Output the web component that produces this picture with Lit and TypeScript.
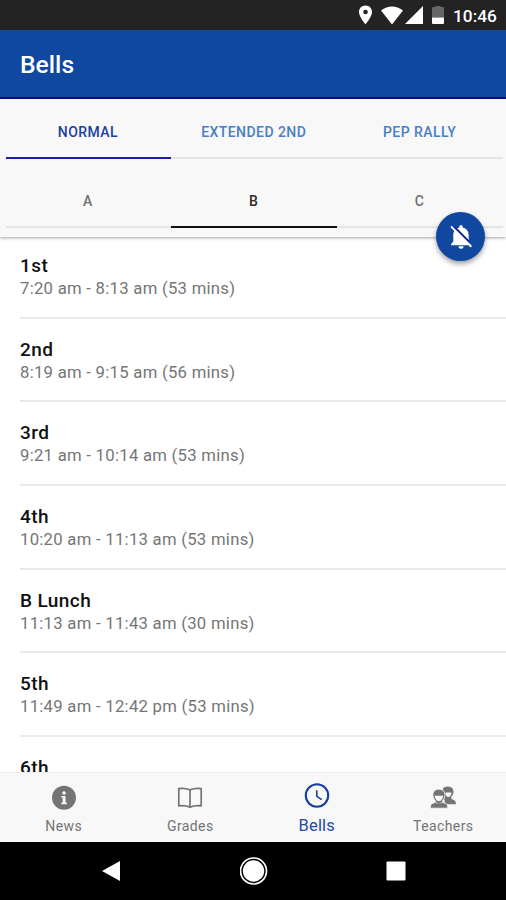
import { LitElement, html, css, svg } from "lit";
import { customElement, property, state } from "lit/decorators.js";
import { classMap } from "lit/directives/class-map.js";

const periods = [
  ["1st", "7:20 am - 8:13 am (53 mins)"],
  ["2nd", "8:19 am - 9:15 am (56 mins)"],
  ["3rd", "9:21 am - 10:14 am (53 mins)"],
  ["4th", "10:20 am - 11:13 am (53 mins)"],
  ["B Lunch", "11:13 am - 11:43 am (30 mins)"],
  ["5th", "11:49 am - 12:42 pm (53 mins)"],
  ["6th", ""],
];

const icons: Record<string, unknown> = {
  News: svg`<circle cx="13" cy="12.800" r="12" fill="currentColor"/><circle cx="13" cy="8" r="1.8" fill="#f8f8f8"/><path d="M10.3 11h4.2v6.6h1.3v1.6h-5.5v-1.6h1.4v-5h-1.4z" fill="#f8f8f8"/>`,
  Grades: svg`<path d="M1.8 3.6q6-.8 11.2 1.3q5.200-2.100 11.200-1.300v17.200q-6-.8-11.200 1.300q-5.200-2.100-11.200-1.300zM13 4.900v17.200" fill="none" stroke="currentColor" stroke-width="1.7" stroke-linejoin="round"/>`,
  Bells: svg`<circle cx="13" cy="12.500" r="11.200" fill="none" stroke="currentColor" stroke-width="2.1"/><path d="M12.800 7.300v6l5 3.400" fill="none" stroke="currentColor" stroke-width="1.6"/>`,
  Teachers: svg`
    <path d="M13 3.200C14.200 2 16 1.300 18 1.400c3.800.1 5.700 2.600 5.500 5.600c-.1 2-1 3.600-2.200 4.600v2.200l3.300 1.700c.9.500 1.200 1.600 1.300 3.700H15z" fill="currentColor"/>
    <path d="M15.300 7.500h6.200c-.2 2.700-1.600 4.600-3.200 4.600s-3-2-3-4.600z" fill="#f8f8f8"/>
    <path d="M8.800 4.200c4 0 6.200 2.600 6.100 6c-.1 2.500-1.100 4.300-2.300 5.500v1.600l3.600 1.400c1.100.5 1.400 1.900 1.500 4.500H.4c.1-2.600.4-4 1.500-4.500l3.500-1.400v-1.600c-1.300-1.200-2.400-3-2.500-5.500c-.1-3.400 2-6 5.900-6z" fill="currentColor" stroke="#f8f8f8" stroke-width=".8"/>
    <path d="M4.700 10.800h8.500c-.2 3-2 5.300-4.200 5.300s-4.100-2.300-4.300-5.300zM5.800 17.300l3.100 1l3.200-1v.9H5.800z" fill="#f8f8f8"/>`,
};

@customElement("segment-bar")
class SegmentBar extends LitElement {
  @property({ attribute: false }) items: string[] = [];
  @property() selected = "";
  @property({ type: Boolean, reflect: true }) dark = false;

  static styles = css`
    :host { display: flex; padding: 0 3px 0 5.5px; box-sizing: border-box; }
    .segment {
      flex: 1; box-sizing: border-box; border: 0; margin: 0; padding: 2px 1px 0 0;
      background: none; font: 500 14px/18px Roboto, sans-serif;
      letter-spacing: 0.45px;
      color: #4a7fc4; border-bottom: 2px solid #e5e5e7;
    }
    .selected { color: #1c3fa2; border-color: #1c20a0; }
    :host([dark]) .segment { color: #707070; padding-top: 0; }
    :host([dark]) .selected { color: #2a2a2a; border-color: #111; }
  `;

  render() {
    return this.items.map(
      (item) => html`<button class=${classMap({ segment: true, selected: item === this.selected })}
        @click=${() => this.dispatchEvent(new CustomEvent("pick", { detail: item }))}>${item}</button>`,
    );
  }
}

@customElement("app-root")
class AppRoot extends LitElement {
  @state() private schedule = "NORMAL";
  @state() private lunch = "B";

  static styles = css`
    :host {
      display: flex; flex-direction: column; width: 506px; height: 900px;
      overflow: hidden; background: #fff; font-family: Roboto, sans-serif;
    }
    .status {
      flex: 0 0 30px; background: #232323; color: #fff; display: flex;
      align-items: center; justify-content: flex-end; padding-right: 9px;
      box-sizing: border-box; font-size: 17.300px; font-weight: 500;
    }
    .status svg { display: block; }
    .signals { margin-right: 7px; }
    .battery { margin-right: 9px; }
    .clock { padding-top: 2px; width: 44px; white-space: nowrap; }
    .header {
      flex: 0 0 69px; box-sizing: border-box; background: #0f47a1;
      border-bottom: 2px solid #0a0a90; color: #fff; padding: 0 20px;
      display: flex; align-items: center;
    }
    .title { margin: 0; font-size: 24.700px; line-height: 30px; font-weight: 500; padding-top: 3px; }
    .filters {
      flex: 0 0 138px; background: #f8f8f8; position: relative; z-index: 1;
      box-shadow: 0 1px 3px rgba(0, 0, 0, 0.36);
    }
    .schedules { height: 60px; padding-top: 6px; }
    .lunches { height: 69px; padding-top: 16px; }
    .fab {
      position: absolute; right: 21px; bottom: -24px; width: 49px; height: 49px;
      border: 0; padding: 0; border-radius: 50%; background: #0f47a1;
      box-shadow: 0 3px 5px rgba(0, 0, 0, 0.36);
      display: flex; align-items: center; justify-content: center;
    }
    .list { flex: 1 1 0; min-height: 0; overflow: hidden; margin-top: -2px; }
    .row {
      height: 83.700px; box-sizing: border-box; margin-left: 20px;
      border-bottom: 2px solid #e9e9e9; padding-top: 19px;
    }
    .name { font-size: 19px; line-height: 24px; font-weight: 500; color: #111; letter-spacing: 0.4px; }
    .time { font-size: 16.700px; line-height: 21px; color: #757575; letter-spacing: 0.27px; }
    .tabs {
      flex: 0 0 70px; box-sizing: border-box; background: #f8f8f8; display: flex;
      border-top: 1px solid #eee; position: relative;
    }
    .tab {
      flex: 1; display: flex; flex-direction: column; align-items: center;
      padding: 12px 0 0 1px; font-size: 14px; line-height: 18px; color: #747474;
      letter-spacing: 0.4px;
    }
    .tab svg { display: block; margin-bottom: 6px; }
    .active { color: #2349a5; padding-top: 10px; font-size: 16.500px; letter-spacing: 0.2px; }
    .active svg { color: #143fa2; margin-bottom: 8px; }
    .system {
      flex: 0 0 58px; background: #000; display: flex; align-items: center;
      justify-content: space-between; padding: 0 100px; box-sizing: border-box;
    }
    .system svg { display: block; }
  `;

  render() {
    return html`
      <div class="status">
        <svg class="signals" width="67" height="22" viewBox="0 0 67 22" fill="#fff">
          <path fill-rule="evenodd" d="M7.500 1.500C3.900 1.500 1 4.300 1 7.900c0 4.700 6.500 12.300 6.500 12.300S14 12.600 14 7.900c0-3.600-2.900-6.400-6.500-6.400zm0 4.200a2.300 2.300 0 1 1 0 4.600a2.300 2.300 0 0 1 0-4.600z" />
          <path d="M23 6.400Q34 -1.300 45 6.400L34 20.400z" />
          <path d="M65 2v18H47z" />
        </svg>
        <svg class="battery" width="12" height="20" viewBox="0 0 12 20">
          <path d="M3.500 2V1h5v1H11q1 0 1 1v9.500H0V3q0-1 1-1z" fill="#666" />
          <path d="M0 12.500h12V18q0 1-1 1H1q-1 0-1-1z" fill="#fff" />
        </svg>
        <span class="clock">10:46</span>
      </div>
      <header class="header"><h1 class="title">Bells</h1></header>
      <section class="filters">
        <segment-bar class="schedules" .items=${["NORMAL", "EXTENDED 2ND", "PEP RALLY"]}
          .selected=${this.schedule} @pick=${(e: CustomEvent) => (this.schedule = e.detail)}></segment-bar>
        <segment-bar class="lunches" dark .items=${["A", "B", "C"]}
          .selected=${this.lunch} @pick=${(e: CustomEvent) => (this.lunch = e.detail)}></segment-bar>
        <button class="fab" aria-label="Toggle notifications">
          <svg width="28" height="28" viewBox="0 0 28 28">
            <path d="M12.300 3.700a1.700 1.700 0 0 1 3.400 0v.8c3.700.8 6 3.700 6 7.700v6.300l2.300 2.800v1H4v-1l2.300-2.800v-6.300c0-4 2.300-6.900 6-7.700zM11.500 23.300h5a2.500 2.500 0 0 1-5 0z" fill="#fff" />
            <path d="M5.500 2.200L26 22.800" stroke="#0f47a1" stroke-width="2" />
            <path d="M7.500 4.200L22 18.800" stroke="#12209a" stroke-width="1.800" />
            <path d="M4 3.400L24.300 23.800" stroke="#fff" stroke-width="2" />
          </svg>
        </button>
      </section>
      <main class="list">
        ${periods.map(([name, time]) => html`
          <div class="row"><div class="name">${name}</div><div class="time">${time}</div></div>`)}
      </main>
      <nav class="tabs">
        ${["News", "Grades", "Bells", "Teachers"].map((label) => html`
          <div class=${classMap({ tab: true, active: label === "Bells" })}>
            <svg width="26" height="26" viewBox="0 0 26 26">${icons[label]}</svg>
            <span>${label}</span>
          </div>`)}
      </nav>
      <div class="system">
        <svg width="22" height="22" viewBox="0 0 22 22"><path d="M2 11L20 1v20z" fill="#fff" /></svg>
        <svg width="28" height="28" viewBox="0 0 28 28">
          <circle cx="13.500" cy="14" r="13" fill="none" stroke="#fff" stroke-width="1.700" />
          <circle cx="13.500" cy="14" r="10.700" fill="#fff" />
        </svg>
        <svg width="20" height="20" viewBox="0 0 20 20"><rect x="0.500" y="0.500" width="19" height="19" rx="1" fill="#fff" /></svg>
      </div>
    `;
  }
}
